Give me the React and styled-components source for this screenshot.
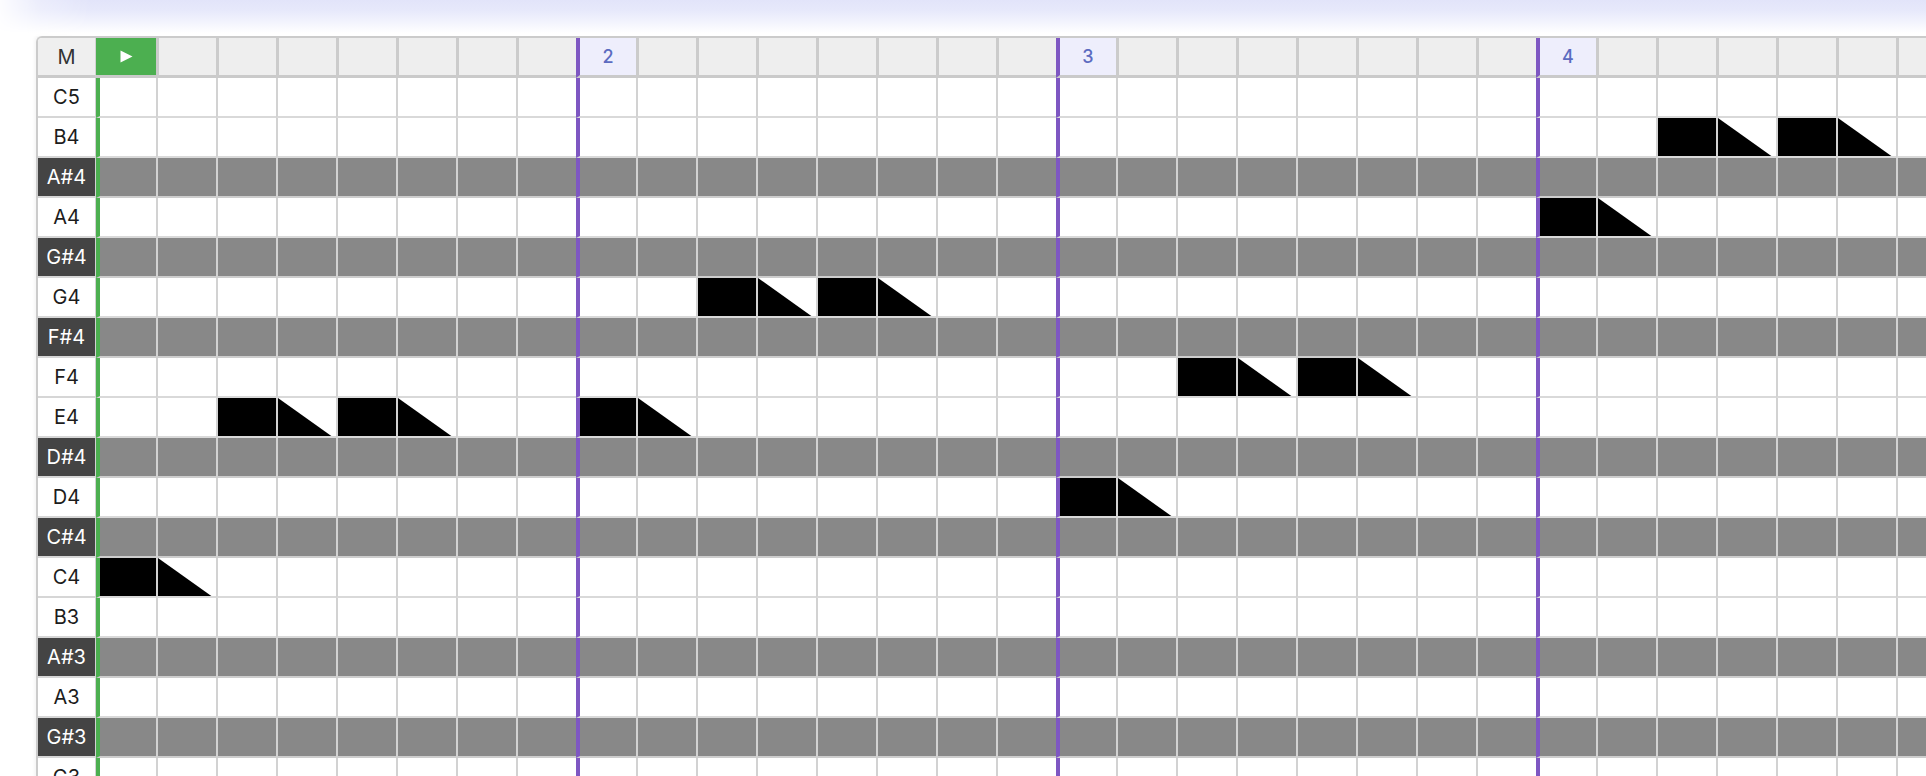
import React from "react";
import styled, { createGlobalStyle, css } from "styled-components";

const GlobalStyle = createGlobalStyle`
  html, body {
    margin: 0;
    padding: 0;
    overflow: hidden;
    background: #ffffff;
    font-family: Inter, "Liberation Sans", Arial, sans-serif;
  }
`;

const STEPS = 32;
const STEPS_PER_BAR = 8;

const KEYS = [
  "C5", "B4", "A#4", "A4", "G#4", "G4", "F#4", "F4", "E4", "D#4",
  "D4", "C#4", "C4", "B3", "A#3", "A3", "G#3", "G3", "F#3", "F3",
];

// melody: [key, step where the note starts]; every note lasts two steps
const MELODY = [
  ["C4", 0], ["E4", 2], ["E4", 4], ["E4", 8], ["G4", 10], ["G4", 12],
  ["D4", 16], ["F4", 18], ["F4", 20], ["A4", 24], ["B4", 26], ["B4", 28],
];

const noteMap = {};
MELODY.forEach(([key, step]) => {
  noteMap[`${key}:${step}`] = "head";
  noteMap[`${key}:${step + 1}`] = "tail";
});

const Page = styled.div`
  display: flex;
  flex-direction: column;
  min-height: 100vh;
`;

const TopGlow = styled.div`
  height: 36px;
  background: linear-gradient(to bottom, #e2e4fa 0%, #e7e9fb 30%, #f2f3fd 60%, #ffffff 92%);
  -webkit-mask-image: linear-gradient(to right, rgba(0,0,0,0.1) 0px, rgba(0,0,0,0.7) 40px, #000 90px);
  mask-image: linear-gradient(to right, rgba(0,0,0,0.1) 0px, rgba(0,0,0,0.7) 40px, #000 90px);
`;

const Frame = styled.div`
  margin-left: 36px;
  align-self: flex-start;
  border: 2px solid #cbcbcb;
  border-right: none;
  border-radius: 6px 0 0 0;
  overflow: hidden;
  box-shadow: -1px -1px 4px rgba(0, 0, 0, 0.06);
`;

const Roll = styled.div`
  display: grid;
  grid-template-columns: 58px repeat(${STEPS}, 60px);
  grid-auto-rows: 40px;
`;

const Corner = styled.div`
  box-sizing: border-box;
  display: flex;
  align-items: center;
  justify-content: center;
  background: #efefef;
  color: #333;
  font-size: 20px;
  border-right: 1px solid #d2d2d2;
  border-bottom: 3px solid #cacaca;
`;

const lineFor = (edge) => {
  if (edge === "start") return "4px solid #4caf50";
  if (edge === "bar") return "4px solid #7e57c2";
  return "2px solid #d2d2d2";
};

const HeadCell = styled.div`
  box-sizing: border-box;
  display: flex;
  align-items: center;
  justify-content: center;
  background: #eeeeee;
  border-left: ${(p) => (p.$edge === "start" ? "none" : p.$edge === "bar" ? lineFor(p.$edge) : "3px solid #cbcbcb")};
  border-bottom: 3px solid #cacaca;
  color: #5c6bc0;
  font-size: 18px;
  font-weight: 500;
  ${(p) =>
    p.$edge === "start" &&
    css`
      background: #4caf50;
    `}
  ${(p) =>
    p.$edge === "bar" &&
    css`
      background: #eeeefc;
    `}
`;

const KeyCell = styled.div`
  box-sizing: border-box;
  display: flex;
  align-items: center;
  justify-content: center;
  font-size: 20px;
  border-right: 1px solid #d2d2d2;
  border-bottom: 2px solid #d6d6d6;
  background: ${(p) => (p.$black ? "#444444" : "#ffffff")};
  color: ${(p) => (p.$black ? "#ffffff" : "#1c1c1c")};
`;

const StepCell = styled.div`
  box-sizing: border-box;
  position: relative;
  border-left: ${(p) => lineFor(p.$edge)};
  border-bottom: 2px solid ${(p) => (p.$black ? "#cdcdcd" : "#d9d9d9")};
  background: ${(p) => (p.$black ? "#888888" : "#ffffff")};
  ${(p) =>
    p.$note === "head" &&
    css`
      background: #000000;
    `}
  ${(p) =>
    p.$note === "tail" &&
    css`
      &::after {
        content: "";
        position: absolute;
        inset: 0;
        background: #000000;
        clip-path: polygon(0 0, 92% 100%, 0 100%);
      }
    `}
`;

const PlayIcon = () => (
  <svg width="13" height="13" viewBox="0 0 13 13" aria-hidden="true">
    <path d="M0.5 0.5 L12.5 6.5 L0.5 12.5 Z" fill="#ffffff" />
  </svg>
);

const edgeOf = (step) => {
  if (step === 0) return "start";
  if (step % STEPS_PER_BAR === 0) return "bar";
  return "none";
};

export default function App() {
  const steps = Array.from({ length: STEPS }, (_, i) => i);
  return (
    <>
      <GlobalStyle />
      <Page>
        <TopGlow />
        <Frame>
          <Roll>
            <Corner>M</Corner>
            {steps.map((s) => {
              const edge = edgeOf(s);
              return (
                <HeadCell key={`h${s}`} $edge={edge}>
                  {edge === "start" && <PlayIcon />}
                  {edge === "bar" && s / STEPS_PER_BAR + 1}
                </HeadCell>
              );
            })}
            {KEYS.map((key) => {
              const black = key.includes("#");
              return (
                <React.Fragment key={key}>
                  <KeyCell $black={black}>{key}</KeyCell>
                  {steps.map((s) => (
                    <StepCell
                      key={`${key}${s}`}
                      $black={black}
                      $edge={edgeOf(s)}
                      $note={noteMap[`${key}:${s}`]}
                    />
                  ))}
                </React.Fragment>
              );
            })}
          </Roll>
        </Frame>
      </Page>
    </>
  );
}
